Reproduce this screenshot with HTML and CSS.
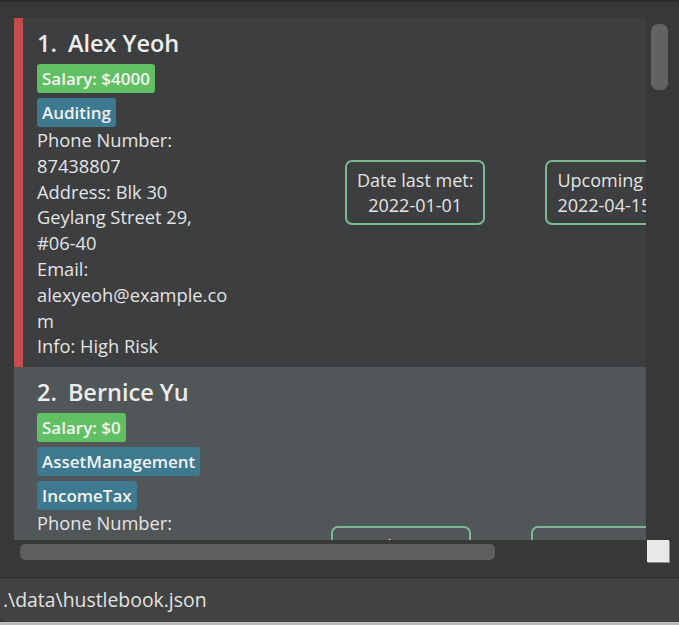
FILE: index.html
```html
<!DOCTYPE html>
<html lang="en">
<head>
<meta charset="utf-8">
<title>HustleBook</title>
<link rel="stylesheet" href="styles.css">
</head>
<body>
<div class="app">
  <div class="topline"></div>
  <div class="list-pane">
    <div class="viewport">
      <div class="list">
        <div class="card card--selected">
          <div class="info">
            <div class="name"><span class="index">1.</span>Alex Yeoh</div>
            <div class="badge badge--salary">Salary: $4000</div>
            <div class="badge badge--tag">Auditing</div>
            <div class="details">
              <p>Phone Number: 87438807</p>
              <p>Address: Blk 30 Geylang Street 29, <span class="nobr">#06-40</span></p>
              <p class="wrap-any">Email: alexyeoh@example.com</p>
              <p>Info: High Risk</p>
            </div>
          </div>
          <div class="meetings">
            <div class="meet">Date last met:<br>2022-01-01</div>
            <div class="meet meet--next">Upcoming meeting:<br>2022-04-15</div>
          </div>
        </div>
        <div class="card card--alt">
          <div class="info">
            <div class="name"><span class="index">2.</span>Bernice Yu</div>
            <div class="badge badge--salary">Salary: $0</div>
            <div class="badge badge--tag">AssetManagement</div>
            <div class="badge badge--tag">IncomeTax</div>
            <div class="details">
              <p>Phone Number: 99272758</p>
              <p>Address: Blk 30 Lorong 3 Serangoon Gardens, <span class="nobr">#07-18</span></p>
              <p class="wrap-any">Email: berniceyu@example.com</p>
              <p>Info: Low Risk</p>
            </div>
          </div>
          <div class="meetings">
            <div class="meet">Date last met:<br>2022-02-14</div>
            <div class="meet meet--next">Upcoming meeting:<br>2022-05-01</div>
          </div>
        </div>
      </div>
    </div>
    <div class="vscroll"><div class="vthumb"></div></div>
    <div class="hscroll"><div class="hthumb"></div></div>
    <div class="corner-cell"><div class="corner"></div></div>
  </div>
  <div class="status">.\data\hustlebook.json</div>
  <div class="bottomline"></div>
</div>
</body>
</html>
```

FILE: styles.css
```css
* { box-sizing: border-box; }

html, body {
  margin: 0;
  padding: 0;
  width: 679px;
  height: 625px;
  overflow: hidden;
  background: #383838;
  font-family: "Open Sans", "Noto Sans", sans-serif;
  color: #e6e6e6;
}

.app {
  display: flex;
  flex-direction: column;
  height: 625px;
}

.topline {
  height: 2px;
  background: #2b2b2b;
  flex: none;
}

.list-pane {
  flex: none;
  height: 575px;
  display: grid;
  grid-template-columns: 632px 33px;
  grid-template-rows: 522px 36px;
  padding: 16px 0 0 14px;
  background: #383838;
}

.viewport {
  overflow: hidden;
  position: relative;
}

.list {
  display: flex;
  flex-direction: column;
  min-width: 100%;
  width: max-content;
}

.card {
  display: flex;
  align-items: center;
  padding: 8px 0 8px 14px;
  background: #3c3e40;
  border-left: 9px solid transparent;
}

.card--selected {
  border-left-color: #c84b4b;
}

.card--alt {
  background: #515658;
}

.info {
  width: 195px;
  flex: none;
  display: flex;
  flex-direction: column;
  align-items: flex-start;
}

.name {
  font-size: 23.5px;
  font-weight: 600;
  line-height: 34px;
  color: #ececec;
  margin-bottom: 4px;
  white-space: nowrap;
}

.index {
  display: inline-block;
  margin-right: 11px;
}

.badge {
  height: 29px;
  line-height: 29px;
  padding: 0 5px;
  border-radius: 3px;
  font-size: 17px;
  font-weight: 600;
  color: #f2f2f2;
  margin-bottom: 5px;
  white-space: nowrap;
}

.badge--salary { background: #62c064; }
.badge--tag { background: #3d7a8f; }

.details {
  margin-top: -5px;
  font-size: 18.3px;
  line-height: 25.8px;
  color: #e4e4e4;
}

.details p { margin: 0; }

.nobr { white-space: nowrap; }

.wrap-any { overflow-wrap: anywhere; }

.meetings {
  display: flex;
  gap: 60px;
  margin-left: 113px;
  flex: none;
}

.card--alt .meetings { margin-left: 99px; }

.meet {
  height: 65px;
  padding: 0 10px;
  border: 2px solid #7db893;
  border-radius: 7px;
  display: flex;
  align-items: center;
  justify-content: center;
  text-align: center;
  font-size: 18px;
  line-height: 25px;
  color: #e4e4e4;
  white-space: nowrap;
}

.meet--next {
  text-align: left;
  justify-content: flex-start;
}

.vscroll {
  padding: 6px 0 0 5px;
}

.vthumb {
  width: 17px;
  height: 66px;
  border-radius: 7px;
  background: #626262;
}

.hscroll {
  padding: 4px 0 0 6px;
}

.hthumb {
  width: 475px;
  height: 16px;
  border-radius: 5px;
  background: #5e5e5e;
}

.corner-cell {
  padding: 0 0 0 1px;
}

.corner {
  width: 22px;
  height: 22px;
  background: #e8e8e8;
  box-shadow: 1px 1px 0 #8a8a8a;
}

.status {
  flex: none;
  height: 45px;
  border-top: 1px solid #2c2c2c;
  background: #424242;
  border-bottom-left-radius: 6px;
  padding: 0 0 0 3px;
  font-size: 19.4px;
  line-height: 44px;
  color: #e2e2e2;
  overflow: hidden;
}

.bottomline {
  flex: none;
  height: 3px;
  background: #bcbcbc;
}
```
